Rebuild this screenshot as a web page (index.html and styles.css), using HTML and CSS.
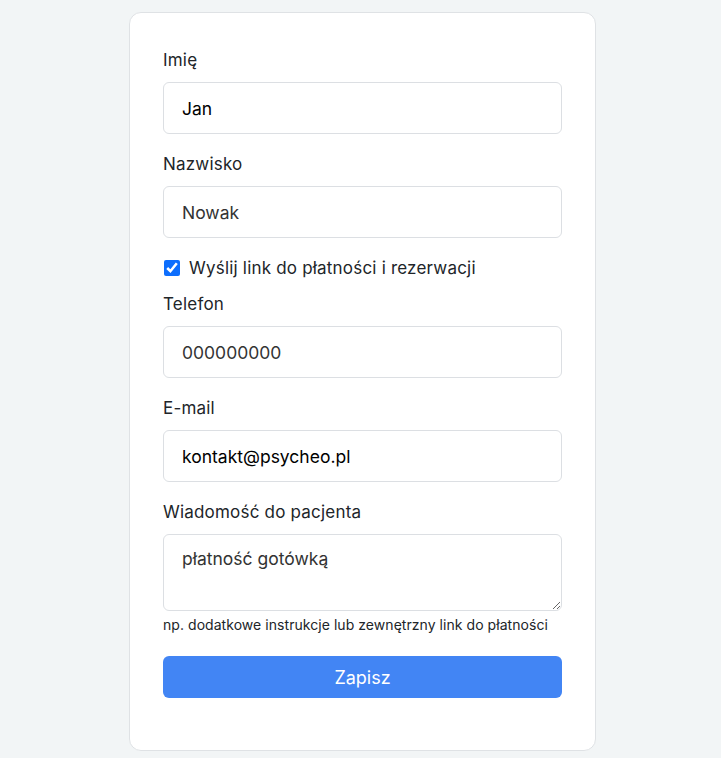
FILE: index.html
```html
<!DOCTYPE html>
<html lang="pl">
<head>
  <meta charset="UTF-8">
  <title>Dane pacjenta</title>
  <link rel="stylesheet" href="styles.css">
</head>
<body>
  <div class="card">
    <form class="form">
      <div class="field">
        <label class="label" for="imie">Imię</label>
        <input class="input input-dark" id="imie" type="text" value="Jan">
      </div>
      <div class="field">
        <label class="label" for="nazwisko">Nazwisko</label>
        <input class="input" id="nazwisko" type="text" value="Nowak">
      </div>
      <label class="check">
        <input type="checkbox" checked>
        <span>Wyślij link do płatności i rezerwacji</span>
      </label>
      <div class="field">
        <label class="label" for="telefon">Telefon</label>
        <input class="input" id="telefon" type="text" value="000000000">
      </div>
      <div class="field">
        <label class="label" for="email">E-mail</label>
        <input class="input input-dark" id="email" type="text" value="kontakt@psycheo.pl">
      </div>
      <div class="field field-last">
        <label class="label" for="wiadomosc">Wiadomość do pacjenta</label>
        <textarea class="input textarea" id="wiadomosc">płatność gotówką</textarea>
        <div class="help">np. dodatkowe instrukcje lub zewnętrzny link do płatności</div>
      </div>
      <button class="btn" type="button">Zapisz</button>
    </form>
  </div>
</body>
</html>
```

FILE: styles.css
```css
body {
  margin: 0;
  background: #f2f5f6;
  font-family: 'Inter', 'Noto Sans', sans-serif;
  color: #212529;
}
.card {
  width: 399px;
  margin: 12px 0 0 129px;
  padding: 35px 33px 52px;
  background: #fff;
  border: 1px solid #dfe2e5;
  border-radius: 12px;
}
.form {
  display: flex;
  flex-direction: column;
}
.field {
  display: flex;
  flex-direction: column;
  margin-bottom: 18px;
}
.label {
  font-size: 17px;
  line-height: 24px;
  letter-spacing: 0.2px;
  margin-bottom: 10px;
}
.input {
  box-sizing: border-box;
  width: 100%;
  height: 52px;
  padding: 0 18px;
  font-family: inherit;
  font-size: 17.5px;
  color: #333;
  background: #fff;
  border: 1px solid #dcdfe3;
  border-radius: 6px;
  outline: none;
}
.input-dark {
  color: #000;
}
.textarea {
  height: 77px;
  padding-top: 13px;
  resize: vertical;
}
.help {
  margin-top: 4px;
  font-size: 14px;
  line-height: 20px;
  letter-spacing: 0.05px;
  color: #212529;
}
.check {
  display: flex;
  align-items: center;
  gap: 9px;
  font-size: 17px;
  line-height: 24px;
  letter-spacing: 0.2px;
  margin-bottom: 12px;
}
.check input {
  width: 16px;
  height: 16px;
  margin: 0 0 0 1px;
  accent-color: #0d6efd;
}
.field-last {
  margin-bottom: 21px;
}
.btn {
  height: 42px;
  font-family: inherit;
  font-size: 18px;
  color: #fff;
  background: #4285f4;
  border: none;
  border-radius: 6px;
}
```
